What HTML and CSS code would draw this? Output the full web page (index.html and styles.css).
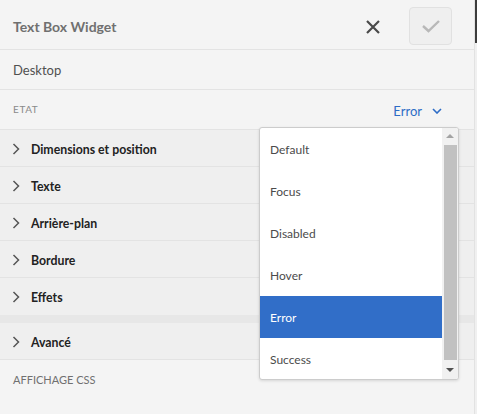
FILE: index.html
```html
<!DOCTYPE html>
<html>
<head>
<meta charset="utf-8">
<link rel="stylesheet" href="styles.css">
</head>
<body>
<div class="page">
  <div class="panel">
    <header class="header">
      <div class="title">Text Box Widget</div>
      <div class="actions">
        <button class="close" aria-label="Fermer">
          <svg width="16" height="16" viewBox="0 0 16 16"><path d="M2 2 L14 14 M14 2 L2 14" stroke="#4a4a4a" stroke-width="2.2" fill="none"/></svg>
        </button>
        <button class="confirm" aria-label="Valider">
          <svg width="20" height="14" viewBox="0 0 20 14"><path d="M2 7 L7.5 12 L18 2" stroke="#b8b8b8" stroke-width="2.4" fill="none"/></svg>
        </button>
      </div>
    </header>
    <div class="row device">Desktop</div>
    <div class="row state">
      <span class="label">ETAT</span>
      <span class="select">Error
        <svg width="10" height="6" viewBox="0 0 10 6"><path d="M1 1 L5 5 L9 1" stroke="#2d6cc6" stroke-width="1.6" fill="none"/></svg>
      </span>
    </div>
    <div class="accordion">
      <div class="item"><svg class="chev" width="8" height="12" viewBox="0 0 8 12"><path d="M1.5 1 L6.5 6 L1.5 11" stroke="#555" stroke-width="1.5" fill="none"/></svg>Dimensions et position</div>
      <div class="item"><svg class="chev" width="8" height="12" viewBox="0 0 8 12"><path d="M1.5 1 L6.5 6 L1.5 11" stroke="#555" stroke-width="1.5" fill="none"/></svg>Texte</div>
      <div class="item"><svg class="chev" width="8" height="12" viewBox="0 0 8 12"><path d="M1.5 1 L6.5 6 L1.5 11" stroke="#555" stroke-width="1.5" fill="none"/></svg>Arrière-plan</div>
      <div class="item"><svg class="chev" width="8" height="12" viewBox="0 0 8 12"><path d="M1.5 1 L6.5 6 L1.5 11" stroke="#555" stroke-width="1.5" fill="none"/></svg>Bordure</div>
      <div class="item last"><svg class="chev" width="8" height="12" viewBox="0 0 8 12"><path d="M1.5 1 L6.5 6 L1.5 11" stroke="#555" stroke-width="1.5" fill="none"/></svg>Effets</div>
      <div class="gap"></div>
      <div class="item adv"><svg class="chev" width="8" height="12" viewBox="0 0 8 12"><path d="M1.5 1 L6.5 6 L1.5 11" stroke="#555" stroke-width="1.5" fill="none"/></svg>Avancé</div>
    </div>
    <div class="css-label">AFFICHAGE CSS</div>
  </div>
  <div class="pagebar"><div class="pagethumb"></div></div>

  <div class="dropdown">
    <ul class="options">
      <li>Default</li>
      <li>Focus</li>
      <li>Disabled</li>
      <li>Hover</li>
      <li class="selected">Error</li>
      <li>Success</li>
    </ul>
    <div class="sb">
      <div class="arrow up"></div>
      <div class="thumb"></div>
      <div class="arrow down"></div>
    </div>
  </div>
</div>
</body>
</html>
```

FILE: styles.css
```css
* { box-sizing: border-box; }
html, body { margin: 0; padding: 0; }
body {
  background: #f4f4f4;
  font-family: Lato, "Open Sans", sans-serif;
  color: #4b4b4b;
}
.page {
  position: relative;
  display: flex;
  width: 477px;
  height: 414px;
  overflow: hidden;
}
.panel {
  width: 475px;
  border-right: 1px solid #e2e2e2;
  display: flex;
  flex-direction: column;
}
.pagebar {
  width: 2px;
  background: #f0f0f0;
}
.pagethumb {
  height: 43px;
  background: #3c3c3c;
}
.header {
  height: 50px;
  border-bottom: 1px solid #e3e3e3;
  display: flex;
  align-items: center;
  justify-content: space-between;
  padding: 4px 22px 0 13px;
}
.title {
  font-size: 14px;
  font-weight: 700;
  color: #707070;
}
.actions {
  display: flex;
  align-items: center;
  gap: 27px;
}
.close, .confirm {
  border: 0;
  padding: 0;
  background: none;
  display: flex;
  align-items: center;
  justify-content: center;
}
.close { width: 18px; height: 18px; }
.confirm {
  width: 43px;
  height: 38px;
  border: 1px solid #e1e1e1;
  border-radius: 4px;
  background: #efefef;
  margin-top: -2px;
}
.row {
  height: 40px;
  border-bottom: 1px solid #e3e3e3;
  padding: 0 13px;
  display: flex;
  align-items: center;
}
.device {
  font-size: 13px;
  color: #505050;
  padding-top: 1px;
}
.state {
  justify-content: space-between;
  padding-right: 32px;
  padding-bottom: 1px;
}
.label {
  font-size: 10px;
  letter-spacing: 0.6px;
  color: #8a8a8a;
}
.select {
  display: flex;
  align-items: center;
  gap: 10px;
  font-size: 13px;
  color: #2d6cc6;
  margin-top: 3px;
}
.accordion {
  background: #efefef;
  display: flex;
  flex-direction: column;
}
.item {
  height: 37px;
  border-bottom: 1px solid #e3e3e3;
  display: flex;
  align-items: center;
  gap: 11px;
  padding-left: 12px;
  padding-top: 2px;
  font-size: 12.3px;
  font-weight: 700;
  color: #222;
}
.item.last { border-bottom: 0; }
.chev { flex: none; margin-top: -1px; }
.gap {
  height: 8px;
  background: #e7e7e7;
}
.css-label {
  padding: 13px 13px 0;
  font-size: 11px;
  color: #707070;
}

.dropdown {
  position: absolute;
  left: 259px;
  top: 127px;
  width: 200px;
  height: 253px;
  background: #fff;
  border: 1px solid #cccccc;
  border-radius: 3px;
  box-shadow: 0 1px 3px rgba(0,0,0,0.12);
  display: flex;
  overflow: hidden;
}
.options {
  list-style: none;
  margin: 0;
  padding: 0;
  flex: 1;
}
.options li {
  height: 42px;
  display: flex;
  align-items: center;
  padding-left: 10px;
  font-size: 12px;
  color: #4b4b4b;
}
.options li.selected {
  background: #316ec8;
  color: #fff;
}
.sb {
  width: 16px;
  background: #f1f1f1;
  display: flex;
  flex-direction: column;
  align-items: center;
}
.arrow {
  width: 0;
  height: 0;
  border-left: 4px solid transparent;
  border-right: 4px solid transparent;
}
.arrow.up {
  border-bottom: 4px solid #a3a3a3;
  margin: 6px 0 7px;
}
.arrow.down {
  border-top: 4px solid #505050;
  margin: 8px 0 7px;
}
.thumb {
  width: 13px;
  flex: 1;
  background: #c1c1c1;
}
```
